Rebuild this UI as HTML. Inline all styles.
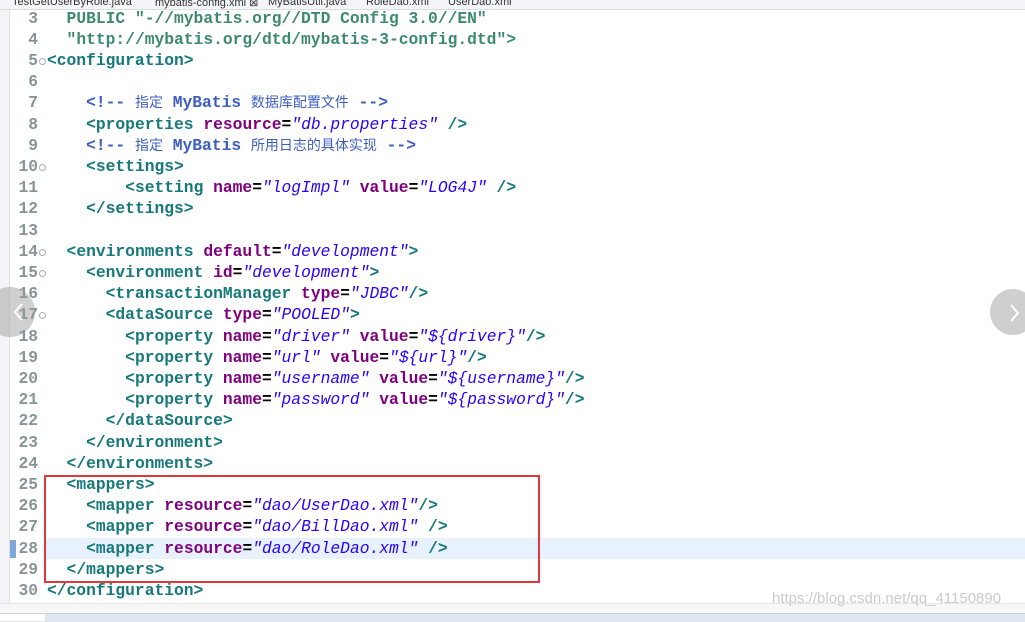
<!DOCTYPE html>
<html><head><meta charset="utf-8"><style>
html,body{margin:0;padding:0;}
body{width:1025px;height:621px;overflow:hidden;background:#fff;position:relative;font-family:"Liberation Mono","Noto Sans CJK SC",monospace;}
.tabs{position:absolute;left:0;top:0;width:1025px;height:9px;background:#f3f5f8;border-bottom:1px solid #d8dde5;font:11px "Liberation Sans",sans-serif;color:#333;overflow:hidden;}
.tabs span{position:absolute;top:-4px;}
.ruler{position:absolute;left:0;top:10px;width:9px;height:593px;background:#f4f4f6;border-right:1px solid #e2e2e8;}
pre{margin:0;position:absolute;top:7.5px;font-family:"Liberation Mono","Noto Sans CJK SC",monospace;font-size:16.3px;font-weight:bold;line-height:21.2px;}
.ln{left:8px;width:30px;text-align:right;color:#8a9496;}
.code{left:47px;}
.t{color:#16787a}.a{color:#7f007f}.v{color:#2a00ff;font-style:italic;font-weight:normal}.c{color:#3f5fbf}.d{color:#3d8a6e}
.cn{font-family:"Noto Sans CJK SC",sans-serif;font-weight:normal;font-size:14px}
.fold{position:absolute;left:39px;width:5px;height:5px;border:1px solid #aab;border-radius:50%;}
</style></head><body>
<div class="tabs">
<span style="left:12px">TestGetUserByRole.java</span>
<span style="left:155px">mybatis-config.xml ⊠</span>
<span style="left:268px">MyBatisUtil.java</span>
<span style="left:366px">RoleDao.xml</span>
<span style="left:448px">UserDao.xml</span>
</div>
<div class="ruler"></div>
<div style="position:absolute;left:44px;top:538px;width:981px;height:21px;background:#e8f2fe"></div>
<div style="position:absolute;left:10px;top:540px;width:6px;height:18px;background:#7fa7d8"></div>
<pre class="ln">3
4
5
6
7
8
9
10
11
12
13
14
15
16
17
18
19
20
21
22
23
24
25
26
27
28
29
30</pre>
<pre class="code">  <span class="d">PUBLIC "-//mybatis.org//DTD Config 3.0//EN"</span>
  <span class="d">"http://mybatis.org/dtd/mybatis-3-config.dtd"&gt;</span>
<span class="t">&lt;configuration&gt;</span>

    <span class="c">&lt;!-- <span class="cn">指定</span> MyBatis <span class="cn">数据库配置文件</span> --&gt;</span>
    <span class="t">&lt;properties</span> <span class="a">resource</span>=<span class="v">"db.properties"</span> <span class="t">/&gt;</span>
    <span class="c">&lt;!-- <span class="cn">指定</span> MyBatis <span class="cn">所用日志的具体实现</span> --&gt;</span>
    <span class="t">&lt;settings&gt;</span>
        <span class="t">&lt;setting</span> <span class="a">name</span>=<span class="v">"logImpl"</span> <span class="a">value</span>=<span class="v">"LOG4J"</span> <span class="t">/&gt;</span>
    <span class="t">&lt;/settings&gt;</span>

  <span class="t">&lt;environments</span> <span class="a">default</span>=<span class="v">"development"</span><span class="t">&gt;</span>
    <span class="t">&lt;environment</span> <span class="a">id</span>=<span class="v">"development"</span><span class="t">&gt;</span>
      <span class="t">&lt;transactionManager</span> <span class="a">type</span>=<span class="v">"JDBC"</span><span class="t">/&gt;</span>
      <span class="t">&lt;dataSource</span> <span class="a">type</span>=<span class="v">"POOLED"</span><span class="t">&gt;</span>
        <span class="t">&lt;property</span> <span class="a">name</span>=<span class="v">"driver"</span> <span class="a">value</span>=<span class="v">"${driver}"</span><span class="t">/&gt;</span>
        <span class="t">&lt;property</span> <span class="a">name</span>=<span class="v">"url"</span> <span class="a">value</span>=<span class="v">"${url}"</span><span class="t">/&gt;</span>
        <span class="t">&lt;property</span> <span class="a">name</span>=<span class="v">"username"</span> <span class="a">value</span>=<span class="v">"${username}"</span><span class="t">/&gt;</span>
        <span class="t">&lt;property</span> <span class="a">name</span>=<span class="v">"password"</span> <span class="a">value</span>=<span class="v">"${password}"</span><span class="t">/&gt;</span>
      <span class="t">&lt;/dataSource&gt;</span>
    <span class="t">&lt;/environment&gt;</span>
  <span class="t">&lt;/environments&gt;</span>
  <span class="t">&lt;mappers&gt;</span>
    <span class="t">&lt;mapper</span> <span class="a">resource</span>=<span class="v">"dao/UserDao.xml"</span><span class="t">/&gt;</span>
    <span class="t">&lt;mapper</span> <span class="a">resource</span>=<span class="v">"dao/BillDao.xml"</span> <span class="t">/&gt;</span>
    <span class="t">&lt;mapper</span> <span class="a">resource</span>=<span class="v">"dao/RoleDao.xml"</span> <span class="t">/&gt;</span>
  <span class="t">&lt;/mappers&gt;</span>
<span class="t">&lt;/configuration&gt;</span></pre>
<div class="fold" style="top:58px"></div>
<div class="fold" style="top:164px"></div>
<div class="fold" style="top:249px"></div>
<div class="fold" style="top:270px"></div>
<div class="fold" style="top:312px"></div>
<div style="position:absolute;left:44px;top:475px;width:492px;height:104px;border:2px solid #e0383c;"></div>
<div style="position:absolute;left:-15px;top:287px;width:50px;height:50px;border-radius:50%;background:rgba(150,150,150,.45)"></div>
<svg style="position:absolute;left:13px;top:302px" width="12" height="20"><path d="M9 2 L2 10 L9 18" stroke="#fff" stroke-width="2" fill="none"/></svg>
<div style="position:absolute;left:990px;top:289px;width:46px;height:46px;border-radius:50%;background:#cfcfcf"></div>
<svg style="position:absolute;left:1008px;top:303px" width="12" height="20"><path d="M3 2 L10 10 L3 18" stroke="#fff" stroke-width="2" fill="none"/></svg>
<div style="position:absolute;left:0;top:603px;width:1025px;height:10px;background:#f7f7f7;border-top:1px solid #e6e6e6"></div>
<div style="position:absolute;left:772px;top:590px;font:15px 'Liberation Sans',sans-serif;color:rgba(190,190,190,.8)">https://blog.csdn.net/qq_41150890</div>
<div style="position:absolute;left:0;top:613px;width:1025px;height:8px;background:#dfe6ee;border-top:1px solid #c8d0da"></div>
<div style="position:absolute;left:0;top:614px;width:45px;height:7px;background:#fff"></div>
</body></html>
